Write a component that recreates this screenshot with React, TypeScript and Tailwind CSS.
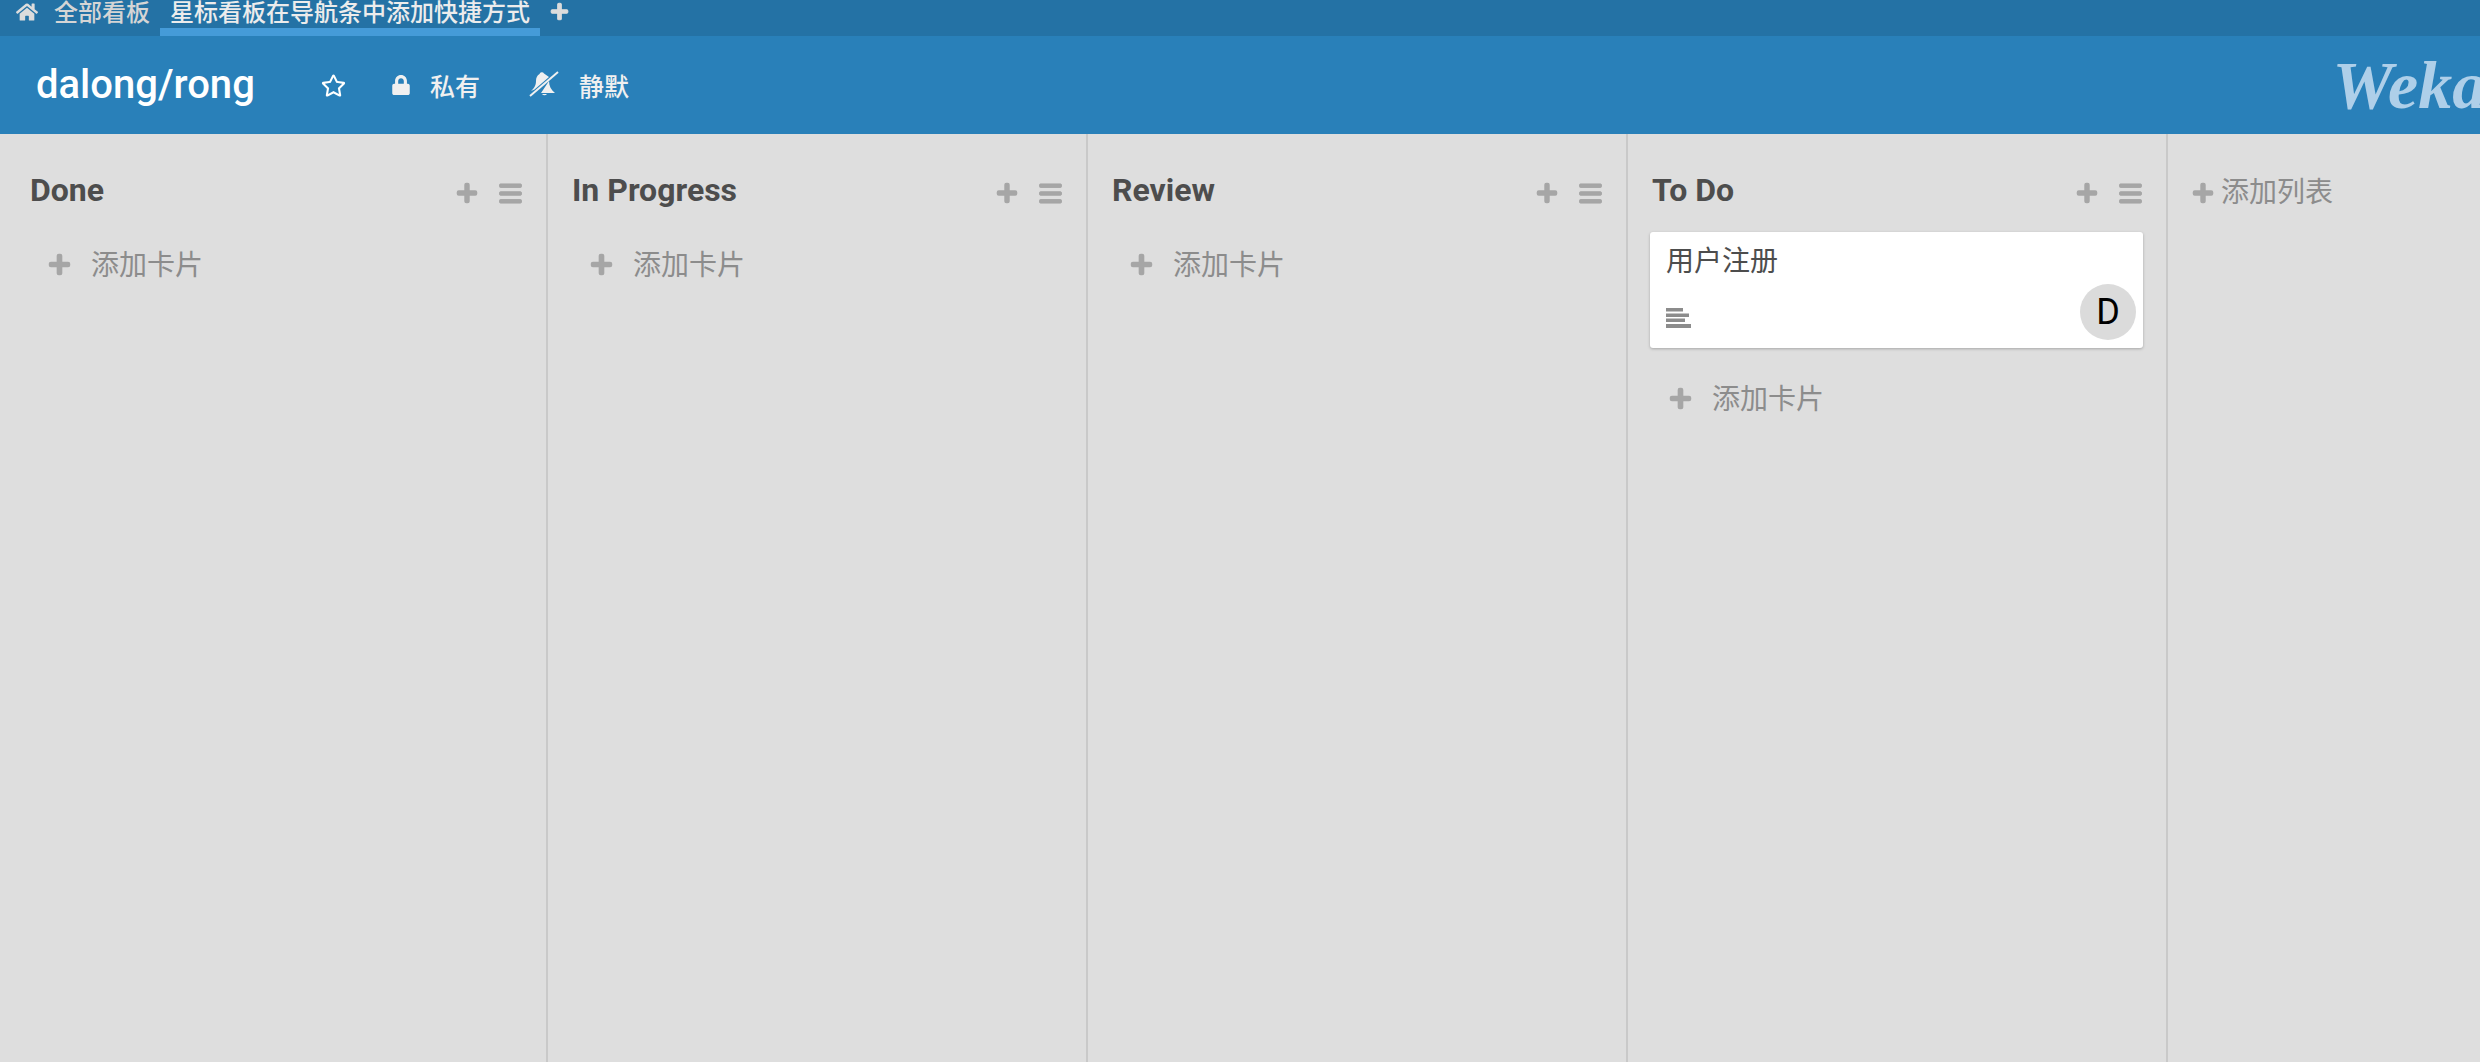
import { FaBars, FaHome, FaLock, FaPlus, FaRegStar } from "react-icons/fa";

const font = "font-['Roboto','Noto_Sans_CJK_SC',sans-serif]";

function BellOff() {
  return (
    <svg width="30" height="26" viewBox="0 0 30 26" fill="#f0f0f0" className="ml-[49px] mb-[2px] shrink-0">
      <path d="M10.5 3a2.5 2.5 0 0 1 4.5-.5l5 3.5L5.500 18.500 2 20c4-3 5-7 5-10 0-3 1-5.500 3.500-7Z" />
      <path d="M20 10c0 5 2 9 6 12H12Z" />
      <path d="M13 23a3 3 0 0 0 5 0Z" />
      <path d="M1 25 29 1" stroke="#f0f0f0" strokeWidth="2" />
    </svg>
  );
}

function DescriptionIcon() {
  return (
    <svg width="25" height="20" viewBox="0 0 25 20" fill="#8c8c8c" className="mb-[12px] shrink-0">
      <rect y="0" width="17" height="3.500" />
      <rect y="5.500" width="23" height="3.500" />
      <rect y="10.500" width="19" height="3.500" />
      <rect y="16" width="25" height="4" />
    </svg>
  );
}

function AddCard({ className }: { className: string }) {
  return (
    <div className={`flex items-center text-[#8c8c8c] ${className}`}>
      <FaPlus size={23} strokeWidth={30} className="text-[#a6a6a6]" />
      <span className="mt-[3px] ml-[20px] text-[28px] leading-[32px]">添加卡片</span>
    </div>
  );
}

function ListHeader({ title }: { title: string }) {
  return (
    <div className="flex h-[40px] items-center">
      <span className="flex-1 text-[32px] leading-[40px] font-bold text-[#4d4d4d]">{title}</span>
      <FaPlus size={22} strokeWidth={30} className="mt-[6px] text-[#a6a6a6]" />
      <FaBars size={25} strokeWidth={20} className="mt-[6px] mr-[-1px] ml-[20px] text-[#a6a6a6]" />
    </div>
  );
}

function Card() {
  return (
    <div className="mt-[22px] mr-[-1px] ml-[-2px] flex h-[116px] flex-col rounded-[3px] bg-white pt-[12px] pr-[7px] pb-[8px] pl-[16px] shadow-[0_1px_3px_rgba(0,0,0,0.25)]">
      <div className="text-[28px] leading-[36px] text-[#4d4d4d]">用户注册</div>
      <div className="flex flex-1 items-end justify-between">
        <DescriptionIcon />
        <div className="flex h-[56px] w-[56px] items-center justify-center rounded-full bg-[#dbdbdb] text-[36px] text-black">
          D
        </div>
      </div>
    </div>
  );
}

const lists = ["Done", "In Progress", "Review", "To Do"];

export default function App() {
  return (
    <div className={`flex h-screen flex-col overflow-hidden bg-[#dedede] ${font}`}>
      <div className="flex h-[36px] shrink-0 items-start bg-[#2472a5] text-[24px] leading-[26px] font-medium">
        <FaHome size={22} className="mt-[1px] ml-[16px] text-[#dcdcdc]" />
        <span className="ml-[16px] w-[106px] text-[#d5d5d5]">全部看板</span>
        <div className="h-[36px] border-b-[8px] border-[#459bd8] px-[10px] text-[#ececec]">
          星标看板在导航条中添加快捷方式
        </div>
        <FaPlus size={19} strokeWidth={30} className="mt-[2px] ml-[10px] text-[#dcdcdc]" />
      </div>

      <div className="flex h-[98px] shrink-0 items-center overflow-hidden bg-[#2980b9] text-white">
        <span className="ml-[36px] w-[285px] text-[40px] leading-[48px] font-medium">dalong/rong</span>
        <FaRegStar size={25} />
        <FaLock size={20} className="ml-[45px] text-[#f0f0f0]" />
        <span className="mt-[6px] ml-[19px] text-[25px] font-medium text-[#f0f0f0]">私有</span>
        <BellOff />
        <span className="mt-[6px] ml-[20px] text-[25px] font-medium text-[#f0f0f0]">静默</span>
        <span className="ml-auto mr-[-44px] text-[68px] leading-[72px] font-bold whitespace-nowrap text-[#aecfe9] italic font-['Liberation_Serif',serif]">
          Wekan
        </span>
      </div>

      <div className="flex flex-1">
        {lists.map((name, i) => (
          <div
            key={name}
            className={`flex flex-col border-r-2 border-[#c9c9c9] pt-[36px] pr-[24px] ${
              i === 0 ? "w-[548px] pl-[30px]" : "w-[540px] pl-[24px]"
            }`}
          >
            <ListHeader title={name} />
            {name === "To Do" && <Card />}
            <AddCard className={name === "To Do" ? "mt-[33px] ml-[17px]" : "mt-[37px] ml-[18px]"} />
          </div>
        ))}
        <div className="flex items-center self-start pt-[36px] pl-[24px] text-[#8c8c8c]">
          <FaPlus size={22} strokeWidth={30} className="mt-[2px] text-[#a6a6a6]" />
          <span className="mt-[3px] ml-[7px] text-[28px] leading-[40px]">添加列表</span>
        </div>
      </div>
    </div>
  );
}
